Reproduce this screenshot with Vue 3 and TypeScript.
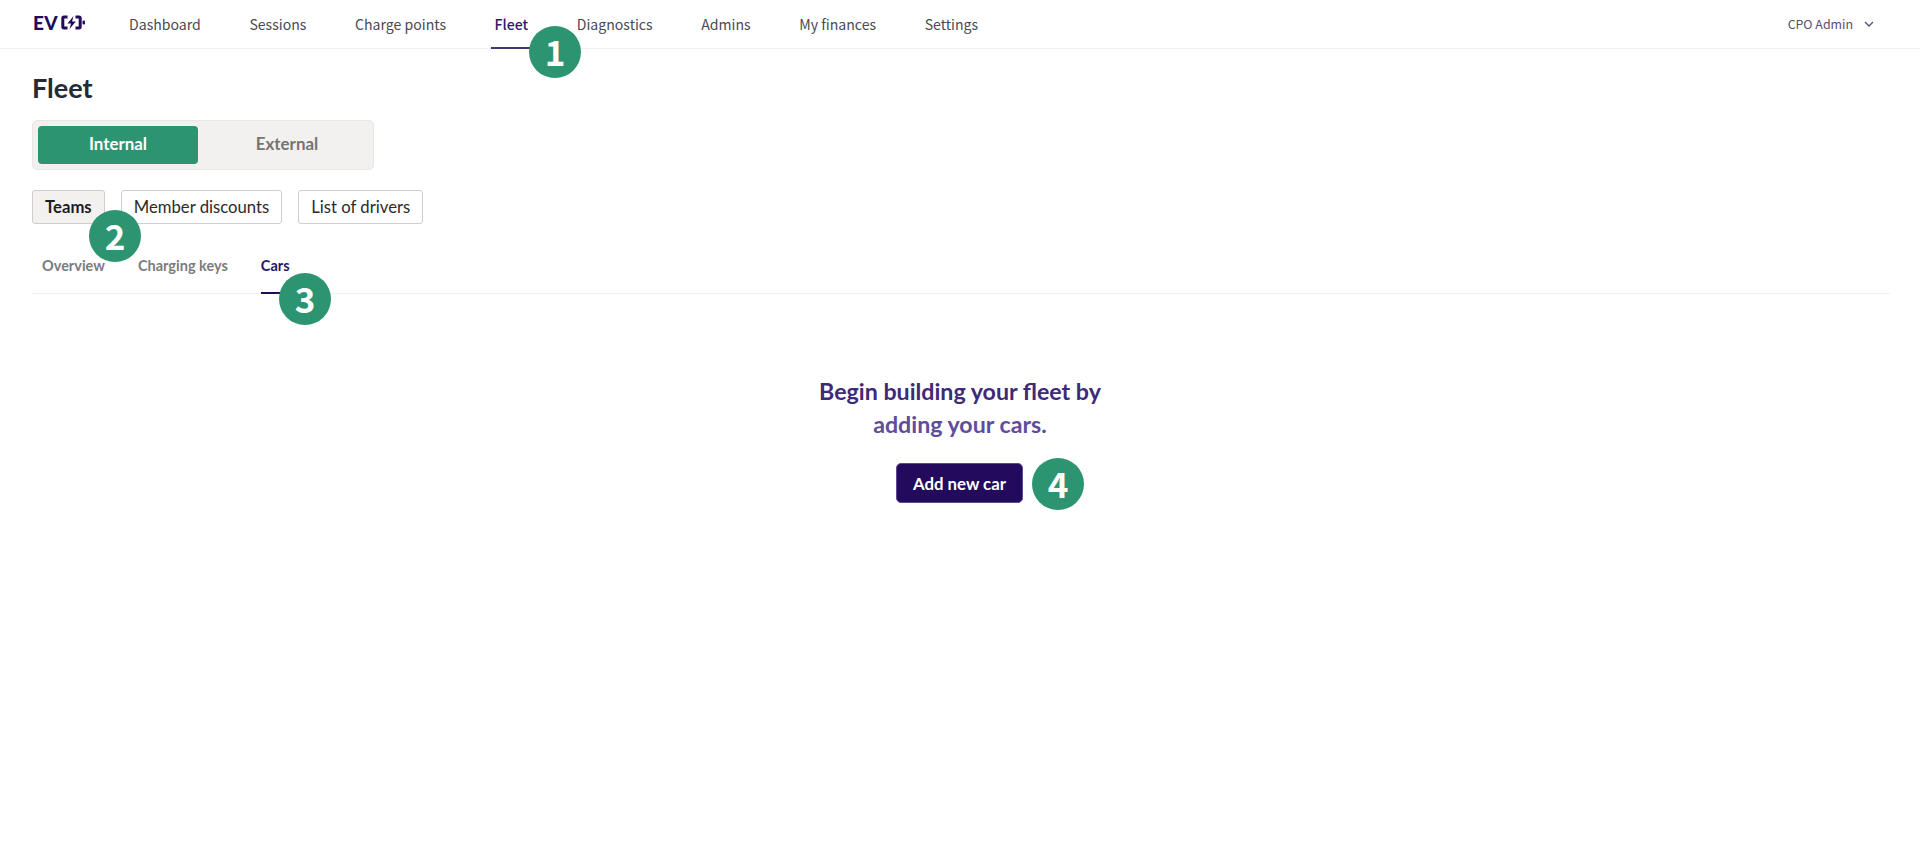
<template>
  <div class="page">
    <header class="topbar">
      <div class="logo">
        <span class="logo-text">EV</span>
        <svg class="logo-icon" width="25" height="15" viewBox="0 0 25 15">
          <path d="M6.500 2H3a1.200 1.200 0 0 0-1.200 1.200v8.600A1.200 1.200 0 0 0 3 13h3.500M14.500 2H18a1.200 1.200 0 0 1 1.200 1.200v8.600A1.200 1.200 0 0 1 18 13h-3.500" fill="none" stroke="#230a5c" stroke-width="3" />
          <path d="M12.500 1 6.500 8.500h3.500L8.500 14 14.800 6.500h-3.700z" fill="#230a5c" />
          <rect x="21.500" y="5.500" width="2.500" height="4" rx="1" fill="#230a5c" />
        </svg>
      </div>
      <nav class="main-nav">
        <a v-for="item in navItems" :key="item" class="nav-item" :class="{ active: item === 'Fleet' }">{{ item }}</a>
      </nav>
      <div class="user-menu">
        <span>CPO Admin</span>
        <svg width="10" height="6" viewBox="0 0 10 6">
          <path d="M1 1l4 4 4-4" fill="none" stroke="#55506a" stroke-width="1.3" />
        </svg>
      </div>
    </header>

    <main class="content">
      <h1>Fleet</h1>

      <div class="segment">
        <button class="segment-btn selected">Internal</button>
        <button class="segment-btn">External</button>
      </div>

      <div class="pills">
        <button v-for="pill in pills" :key="pill" class="pill" :class="{ active: pill === 'Teams' }">{{ pill }}</button>
      </div>

      <div class="tabs">
        <a v-for="tab in tabs" :key="tab" class="tab" :class="{ active: tab === 'Cars' }">{{ tab }}</a>
      </div>

      <section class="empty">
        <p class="empty-title">Begin building your fleet by</p>
        <p class="empty-sub">adding your cars.</p>
        <button class="add-btn">Add new car</button>
      </section>
    </main>

    <span v-for="b in badges" :key="b.n" class="badge" :class="'badge-' + b.n">{{ b.n }}</span>
  </div>
</template>

<script setup lang="ts">
const navItems = ['Dashboard', 'Sessions', 'Charge points', 'Fleet', 'Diagnostics', 'Admins', 'My finances', 'Settings']
const pills = ['Teams', 'Member discounts', 'List of drivers']
const tabs = ['Overview', 'Charging keys', 'Cars']
const badges = [{ n: 1 }, { n: 2 }, { n: 3 }, { n: 4 }]
</script>

<style>
html,
body {
  margin: 0;
  background: #fff;
}
</style>

<style scoped>
.page {
  position: relative;
  height: 867px;
  overflow: hidden;
  font-family: "Lato", "Liberation Sans", sans-serif;
}

.topbar {
  display: flex;
  align-items: center;
  height: 48px;
  padding: 0 30px 0 33px;
  border-bottom: 1px solid #f1f0f2;
  font-family: "Noto Sans CJK JP", "Noto Sans", sans-serif;
}

.logo {
  display: flex;
  align-items: center;
  gap: 3px;
  width: 92px;
  margin-top: -3px;
}

.logo-text {
  font-family: "Lato", sans-serif;
  font-weight: 900;
  font-size: 19px;
  letter-spacing: 0.3px;
  color: #230a5c;
}

.main-nav {
  display: flex;
  gap: 48.6px;
  height: 100%;
  margin-left: 4px;
}

.nav-item {
  display: flex;
  align-items: center;
  position: relative;
  font-size: 14.1px;
  color: #4a4a55;
  height: 49px;
  box-sizing: border-box;
  padding-bottom: 1px;
}

.nav-item.active {
  color: #2e1a66;
  font-weight: 500;
}

.nav-item.active::after {
  content: '';
  position: absolute;
  left: -4px;
  right: -4px;
  bottom: 0;
  height: 2px;
  background: #45356f;
}

.user-menu {
  display: flex;
  align-items: center;
  gap: 11px;
  margin-left: auto;
  margin-right: 16px;
  font-size: 12.4px;
  color: #55506a;
}

.content {
  padding: 0 30px 0 32px;
}

h1 {
  margin: 24px 0 0;
  font-size: 27px;
  line-height: 30px;
  font-weight: 700;
  color: #232b35;
}

.segment {
  display: flex;
  width: 342px;
  height: 50px;
  margin-top: 17px;
  padding: 5px;
  box-sizing: border-box;
  background: #f3f1f0;
  border: 1px solid #e8e6e6;
  border-radius: 5px;
}

.segment-btn {
  flex: 1;
  border: none;
  background: none;
  font: 700 16.9px "Lato", sans-serif;
  color: #77736f;
  padding: 0 0 3px 8px;
}

.segment-btn.selected {
  flex: none;
  width: 160px;
  padding-left: 0;
  background: #2c9470;
  color: #fff;
  border-radius: 4px;
}

.pills {
  display: flex;
  gap: 16px;
  margin-top: 20px;
}

.pill {
  height: 34px;
  padding: 0 12px;
  background: #fff;
  border: 1px solid #cfcdcd;
  border-radius: 3px;
  font: 400 16.7px "Lato", sans-serif;
  color: #2b2b2b;
}

.pill.active {
  background: #f3f1f0;
  font-weight: 700;
  color: #1d1d1d;
}

.tabs {
  display: flex;
  gap: 33px;
  height: 53px;
  margin-top: 16px;
  padding: 0 10px;
  border-bottom: 1px solid #f1f0f2;
}

.tab {
  position: relative;
  padding-top: 17px;
  font-size: 14.5px;
  font-weight: 700;
  color: #7d7b7d;
}

.tab.active {
  color: #2b1566;
}

.tab.active::after {
  content: '';
  position: absolute;
  left: 0;
  right: 0;
  bottom: -1px;
  height: 2px;
  background: #230a5c;
}

.empty {
  display: flex;
  flex-direction: column;
  align-items: center;
  margin-top: 81px;
  margin-right: 2px;
}

.empty p {
  margin: 0;
  font-size: 23.2px;
  line-height: 33px;
  font-weight: 700;
}

.empty-title {
  color: #3d2a78;
}

.empty-sub {
  color: #614b9c;
}

.add-btn {
  width: 127px;
  height: 40px;
  margin-top: 22px;
  margin-right: 1px;
  background: #230a5c;
  border: 1px solid #5d4a94;
  border-radius: 5px;
  color: #fff;
  font: 700 16.8px "Lato", sans-serif;
  padding: 0;
}

.badge {
  position: absolute;
  display: flex;
  align-items: center;
  justify-content: center;
  width: 52px;
  height: 52px;
  padding-bottom: 4px;
  box-sizing: border-box;
  border-radius: 50%;
  background: #2c9470;
  color: #fff;
  font-family: "Noto Sans CJK JP", "Noto Sans", sans-serif;
  font-size: 35px;
  font-weight: 700;
}

.badge-1 { left: 529px; top: 26px; }
.badge-2 { left: 89px; top: 210px; }
.badge-3 { left: 279px; top: 273px; }
.badge-4 { left: 1032px; top: 458px; }
</style>
